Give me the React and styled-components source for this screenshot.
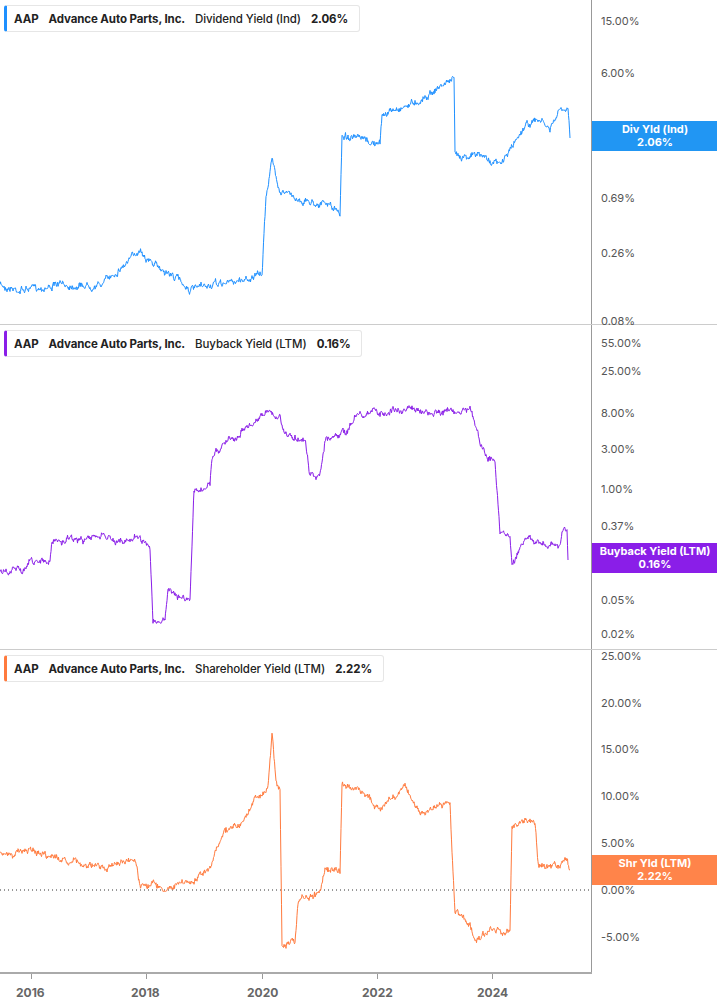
import React from 'react';
import styled, { createGlobalStyle } from 'styled-components';

const Global = createGlobalStyle`
  body { margin: 0; background: #fff; font-family: Inter, "Liberation Sans", sans-serif; }
`;

const CHART_W = 591;

function rng(seed) {
  let s = seed;
  return () => {
    s = (s * 16807) % 2147483647;
    return s / 2147483647;
  };
}

// build a jittery path from rough key points (x, y in panel coords)
function buildPath(keys, seed, amp) {
  const r = rng(seed);
  const pts = [];
  let walk = 0;
  for (let i = 0; i < keys.length - 1; i++) {
    const [x0, y0] = keys[i];
    const [x1, y1] = keys[i + 1];
    const steps = Math.max(1, Math.round((x1 - x0) * 2));
    for (let k = 0; k < steps; k++) {
      const t = k / steps;
      const x = x0 + (x1 - x0) * t;
      walk = walk * 0.8 + (r() - 0.5) * amp;
      const y = y0 + (y1 - y0) * t + walk + (r() - 0.5) * amp * 0.8;
      pts.push(`${x.toFixed(1)},${y.toFixed(1)}`);
    }
  }
  const last = keys[keys.length - 1];
  pts.push(`${last[0]},${last[1]}`);
  return 'M' + pts.join(' L');
}

const offset = (keys, top) => keys.map(([x, y]) => [x, y - top]);

const panels = [
  {
    height: 325,
    color: '#1e90ff',
    badge: '#2196f3',
    metric: 'Dividend Yield (Ind)',
    value: '2.06%',
    short: 'Div Yld (Ind)',
    badgeTop: 121,
    ticks: [['15.00%', 21], ['6.00%', 73], ['0.69%', 198], ['0.26%', 253], ['0.08%', 321]],
    keys: [[0, 285], [20, 290], [60, 285], [100, 285], [130, 260], [140, 248], [150, 262], [180, 280], [190, 290], [240, 280], [262, 275], [266, 195], [272, 160], [280, 190], [300, 200], [330, 205], [340, 215], [342, 135], [380, 145], [382, 115], [420, 100], [450, 80], [454, 80], [455, 155], [480, 155], [500, 165], [510, 150], [525, 125], [540, 120], [550, 130], [560, 110], [568, 112], [570, 138]],
    top: 0,
  },
  {
    height: 325,
    color: '#8a1ee8',
    badge: '#8a1ee8',
    metric: 'Buyback Yield (LTM)',
    value: '0.16%',
    short: 'Buyback Yield (LTM)',
    badgeTop: 218,
    ticks: [['55.00%', 18], ['25.00%', 46], ['8.00%', 88], ['3.00%', 124], ['1.00%', 164], ['0.37%', 201], ['0.05%', 275], ['0.02%', 309]],
    keys: [[0, 572], [20, 570], [30, 562], [50, 560], [52, 540], [80, 540], [110, 535], [115, 545], [135, 535], [150, 550], [153, 620], [165, 620], [168, 592], [190, 600], [194, 490], [210, 485], [212, 455], [230, 440], [250, 425], [270, 410], [275, 420], [280, 420], [285, 435], [305, 440], [310, 475], [320, 475], [325, 440], [345, 435], [355, 415], [400, 410], [420, 412], [470, 410], [480, 440], [485, 455], [495, 460], [500, 530], [510, 535], [512, 565], [525, 540], [545, 545], [560, 545], [562, 530], [567, 530], [568, 560]],
    top: 325,
  },
  {
    height: 324,
    color: '#ff7a3d',
    badge: '#ff844a',
    metric: 'Shareholder Yield (LTM)',
    value: '2.22%',
    short: 'Shr Yld (LTM)',
    badgeTop: 205,
    zero: 240,
    ticks: [['25.00%', 6], ['20.00%', 53], ['15.00%', 99], ['10.00%', 146], ['5.00%', 193], ['0.00%', 240], ['-5.00%', 287]],
    keys: [[0, 855], [30, 850], [60, 860], [100, 868], [135, 860], [140, 885], [165, 888], [195, 880], [210, 865], [225, 830], [240, 825], [255, 800], [268, 790], [272, 730], [276, 780], [280, 790], [282, 945], [295, 940], [298, 900], [320, 895], [325, 870], [340, 870], [342, 785], [360, 790], [380, 810], [395, 795], [405, 785], [420, 815], [440, 805], [450, 805], [455, 910], [470, 925], [475, 940], [490, 930], [510, 932], [512, 825], [535, 820], [538, 865], [560, 865], [562, 857], [567, 858], [570, 870]],
    top: 650,
  },
];

const years = [['2016', 31], ['2018', 146], ['2020', 262], ['2022', 377], ['2024', 492]];

export default function App() {
  return (
    <Page>
      <Global />
      {panels.map((p, i) => (
        <Panel key={i} $h={p.height} $last={i === panels.length - 1}>
          <ChartArea>
            <Legend $color={p.color}>
              <b>AAP</b>
              <b>Advance Auto Parts, Inc.</b>
              <span>{p.metric}</span>
              <b>{p.value}</b>
            </Legend>
            <svg width={CHART_W} height={p.height}>
              {p.zero !== undefined && (
                <line x1="0" x2={CHART_W} y1={p.zero} y2={p.zero} stroke="#333" strokeDasharray="1 3" />
              )}
              <path d={buildPath(offset(p.keys, p.top), 7 + i * 31, 4)} fill="none" stroke={p.color} strokeWidth="1" />
            </svg>
          </ChartArea>
          <Axis>
            {p.ticks.map(([t, y]) => (
              <Tick key={t} style={{ top: y - 7 }}>{t}</Tick>
            ))}
            <Badge $bg={p.badge} style={{ top: p.badgeTop }}>
              <div>{p.short}</div>
              <div>{p.value}</div>
            </Badge>
          </Axis>
        </Panel>
      ))}
      <XAxis>
        {years.map(([y, x]) => (
          <Year key={y} style={{ left: x - 15 }}>{y}</Year>
        ))}
      </XAxis>
    </Page>
  );
}

const Page = styled.div`
  width: 717px;
  height: 1005px;
  overflow: hidden;
`;

const Panel = styled.div`
  display: flex;
  height: ${(p) => p.$h}px;
  border-bottom: 1px solid ${(p) => (p.$last ? '#aaa' : '#ccc')};
  box-sizing: border-box;
  ${(p) => p.$last && 'border-bottom-width: 2px; width: 592px;'}
`;

const ChartArea = styled.div`
  position: relative;
  width: ${CHART_W}px;
  flex: none;
  border-right: 1px solid #999;
  overflow: hidden;
  svg { display: block; }
`;

const Legend = styled.div`
  position: absolute;
  top: 5px;
  left: 4px;
  display: flex;
  gap: 10px;
  align-items: center;
  height: 25px;
  padding: 0 11px 0 7px;
  background: #fff;
  border: 1px solid #e6e6e6;
  border-left: 3px solid ${(p) => p.$color};
  border-radius: 3px;
  font-size: 11.5px;
  color: #222;
  white-space: nowrap;
  letter-spacing: -0.1px;
  b { font-weight: 700; }
  span { font-weight: 500; }
`;

const Axis = styled.div`
  position: relative;
  flex: 1;
`;

const Tick = styled.div`
  position: absolute;
  left: 9px;
  font-size: 11px;
  color: #555;
`;

const Badge = styled.div`
  position: absolute;
  left: 0;
  width: 126px;
  height: 30px;
  background: ${(p) => p.$bg};
  color: #fff;
  font-size: 11px;
  font-weight: 700;
  text-align: center;
  line-height: 13px;
  padding-top: 2px;
  box-sizing: border-box;
`;

const XAxis = styled.div`
  position: relative;
  height: 30px;
  width: 592px;
`;

const Year = styled.div`
  position: absolute;
  top: 11px;
  font-size: 12px;
  font-weight: 700;
  color: #666;
  &::before {
    content: '';
    position: absolute;
    left: 15px;
    top: -11px;
    height: 5px;
    border-left: 1px solid #999;
  }
`;
